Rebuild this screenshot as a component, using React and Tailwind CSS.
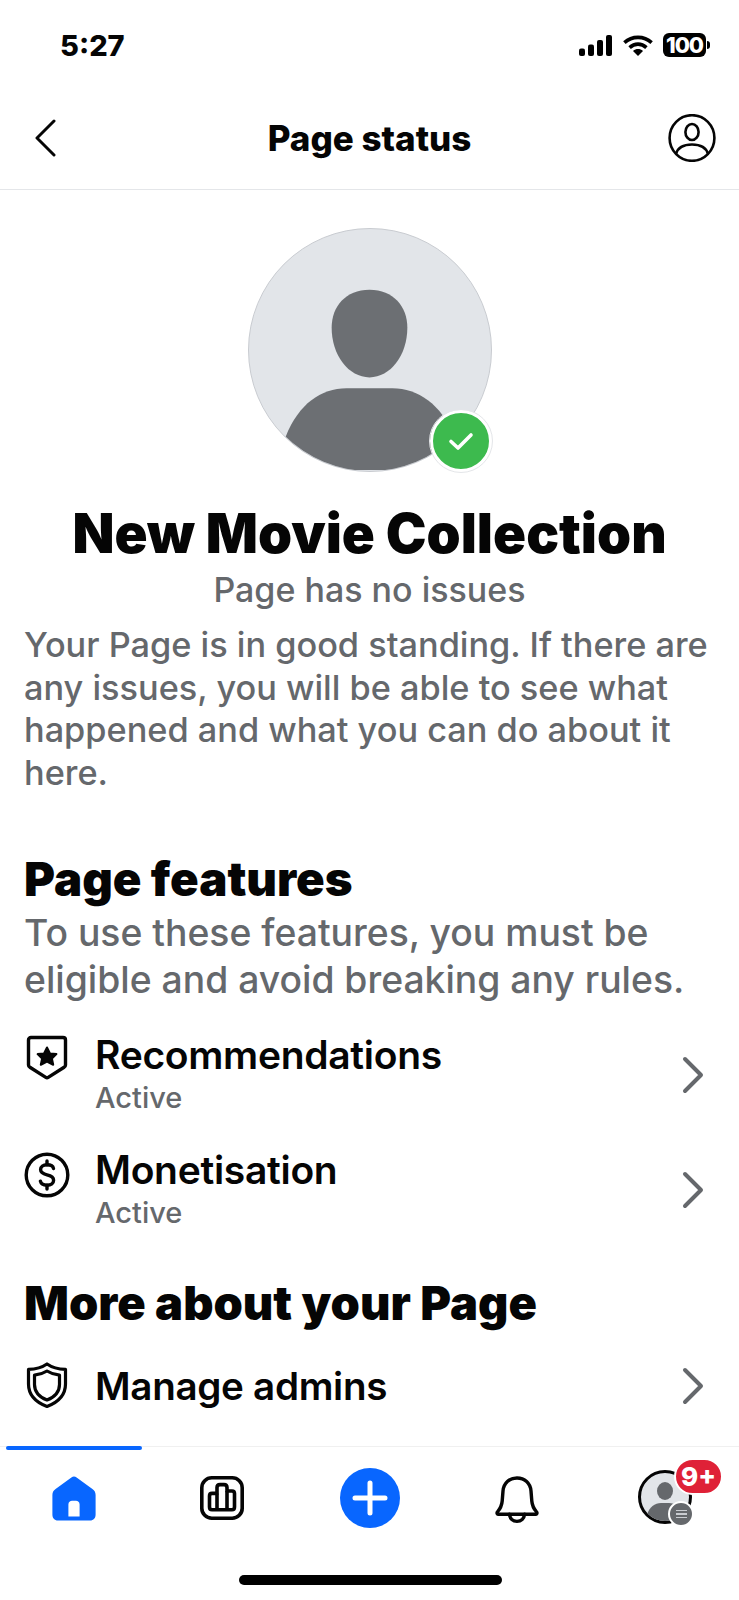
import React from 'react';

// Status bar glyphs
const StatusIcons = () => (
  <div className="flex items-center gap-[10px]">
    <svg width="34" height="21" viewBox="0 0 34 21" fill="#000">
      <rect x="0" y="13.5" width="6" height="7.5" rx="2" />
      <rect x="9" y="9.5" width="6" height="11.5" rx="2" />
      <rect x="18" y="5" width="6" height="16" rx="2" />
      <rect x="27" y="0" width="6" height="21" rx="2" />
    </svg>
    <svg width="30" height="21" viewBox="0 0 30 21" fill="none" stroke="#000" strokeWidth="3.6">
      <path d="M1.4 7.6C9 0.6 21 0.6 28.6 7.6" />
      <path d="M6.6 12.6C11.6 8 18.4 8 23.4 12.6" />
      <path d="M10 16C13 13.4 17 13.4 20 16L15 21Z" fill="#000" stroke="none" />
    </svg>
    <div className="flex items-center">
      <div className="w-[43px] h-[24px] rounded-[6px] bg-black text-white flex items-center justify-center text-[22px] font-extrabold tracking-[-1px] leading-none">100</div>
      <div className="w-[3px] h-[8px] bg-black rounded-r-full ml-[1px]" />
    </div>
  </div>
);

const Chevron = () => (
  <svg width="24" height="38" viewBox="0 0 24 38" fill="none" stroke="#65686c" strokeWidth="4" strokeLinecap="round" strokeLinejoin="round">
    <path d="M4 3L20 19L4 35" />
  </svg>
);

const StarShield = () => (
  <svg width="42" height="46" viewBox="0 0 42 46" fill="none">
    <path d="M5 2.5H37C38.4 2.5 39.5 3.6 39.5 5V30C39.5 31 39 31.8 38.1 32.3L22.2 42.4C21.4 42.9 20.6 42.9 19.8 42.4L3.9 32.3C3 31.8 2.5 31 2.5 30V5C2.5 3.6 3.6 2.5 5 2.5Z" stroke="#050505" strokeWidth="3.4" strokeLinejoin="round" />
    <path d="M21 12.5L24 18.4L30.4 19.1L25.9 23.5L27.2 29.8L21 26.6L14.8 29.8L16.1 23.5L11.6 19.1L18 18.4Z" fill="#050505" stroke="#050505" strokeWidth="2" strokeLinejoin="round" />
  </svg>
);

const Dollar = () => (
  <svg width="46" height="46" viewBox="0 0 46 46" fill="none" stroke="#050505" strokeWidth="3.4" strokeLinecap="round" strokeLinejoin="round">
    <circle cx="23" cy="23" r="20.8" />
    <path d="M29.5 16.5C29 14 26.5 12.8 23 12.8C19.2 12.8 16.6 14.6 16.6 17.6C16.6 20.6 19.4 22 23 22.8C26.8 23.6 29.6 25 29.6 28.2C29.6 31.2 27 33.2 23 33.2C19.4 33.2 17 31.8 16.4 29.2" />
    <path d="M23 9V12.8M23 33.2V37" />
  </svg>
);

const AdminShield = () => (
  <svg width="42" height="46" viewBox="0 0 42 46" fill="none" stroke="#050505" strokeLinejoin="round">
    <path d="M21 2C26 5.5 32 7.2 39.5 7.4V22C39.5 33 31.5 40.5 21 44.5C10.5 40.5 2.5 33 2.5 22V7.4C10 7.2 16 5.5 21 2Z" strokeWidth="3.2" />
    <path d="M21 9C25 11.5 29 12.8 33.5 13.2V22.4C33.5 29.8 28.5 35 21 38C13.5 35 8.5 29.8 8.5 22.4V13.2C13 12.8 17 11.5 21 9Z" strokeWidth="3.2" />
  </svg>
);

const FeatureRow = ({ icon, title, sub, iconBox, titleSize = 'text-[39px]' }) => (
  <div className="flex items-start">
    <div className={`w-[71px] flex shrink-0 ${iconBox}`}>{icon}</div>
    <div className="flex-1">
      <div className={`${titleSize} leading-[44px] font-semibold text-[#050505] tracking-[-0.3px]`}>{title}</div>
      {sub && <div className="text-[29px] leading-[34px] font-medium text-[#65686c] mt-[4px]">{sub}</div>}
    </div>
    <div className={`w-[24px] mr-[10px] ${sub ? 'mt-[23px]' : 'mt-[3px]'}`}><Chevron /></div>
  </div>
);

const TabBar = () => (
  <nav className="relative h-[154px] border-t border-[#f0f0f0] grid grid-cols-5 shrink-0">
    <div className="absolute left-[6px] top-[-1px] w-[136px] h-[4px] rounded-full bg-[#0866ff]" />
    <div className="flex justify-center pt-[29px]">
      <svg width="44" height="46" viewBox="0 0 44 46">
        <path fillRule="evenodd" fill="#0866ff" d="M19.4 1.4C21 0.2 23 0.2 24.6 1.4L40.4 13C42.6 14.6 43.6 16.4 43.6 19V38.4C43.6 42 41.6 44.4 38 44.4H6C2.4 44.4 0.4 42 0.4 38.4V19C0.4 16.4 1.4 14.6 3.6 13ZM16.4 40.4H27.6V28.4C27.6 26 25.8 24.8 24 24.8H20C18.2 24.8 16.4 26 16.4 28.4Z" />
      </svg>
    </div>
    <div className="flex justify-center pt-[29px]">
      <svg width="44" height="44" viewBox="0 0 44 44" fill="none" stroke="#050505" strokeWidth="3.6" strokeLinejoin="round">
        <rect x="1.8" y="1.8" width="40.4" height="40.4" rx="10" />
        <path d="M9.5 31V20C9.5 18.4 10.5 17.4 12 17.4H17V11.5C17 9.6 18.2 8.6 20 8.6H24C25.8 8.6 27 9.6 27 11.5V15H32C33.5 15 34.5 16 34.5 17.6V31C34.5 32.8 33.5 33.8 32 33.8H12C10.5 33.8 9.5 32.8 9.5 31Z" />
        <path d="M17 17.4V33.8M27 15V33.8" />
      </svg>
    </div>
    <div className="flex justify-center pt-[21px] pl-[1px]">
      <div className="w-[60px] h-[60px] rounded-full bg-[#0866ff] flex items-center justify-center">
        <svg width="36" height="36" viewBox="0 0 36 36" stroke="#fff" strokeWidth="5" strokeLinecap="round">
          <path d="M18 3V33M3 18H33" />
        </svg>
      </div>
    </div>
    <div className="flex justify-center pt-[29px]">
      <svg width="44" height="48" viewBox="0 0 44 48" fill="none" stroke="#050505" strokeWidth="3.4" strokeLinejoin="round" strokeLinecap="round">
        <path d="M2.4 36C5 33 6.8 30 7.2 25L8 15C8.6 7 14.4 2 22 2C29.6 2 35.4 7 36 15L36.8 25C37.2 30 39 33 41.6 36C42.4 37.2 41.8 38.2 40.4 38.2H3.6C2.2 38.2 1.6 37.2 2.4 36Z" />
        <path d="M14.4 38.2C14.8 43 18 45.4 22 45.4C26 45.4 29.2 43 29.6 38.2" />
      </svg>
    </div>
    <div className="flex justify-center pt-[22px]">
      <div className="relative w-[54px] h-[54px] mt-[1px]">
        <div className="w-[54px] h-[54px] rounded-full border-[3px] border-[#050505] bg-[#e2e5e9] overflow-hidden">
          <svg width="48" height="48" viewBox="0 0 48 48" fill="#65686c">
            <ellipse cx="24" cy="18" rx="8" ry="9" />
            <path d="M6 42C8 34 14 30 20 30H28C34 30 40 34 42 42L42 48H6Z" />
          </svg>
        </div>
        <div className="absolute right-[-2px] bottom-[-3px] w-[26px] h-[26px] rounded-full bg-[#65686c] border-2 border-white flex flex-col items-center justify-center gap-[2px]">
          <div className="w-[11px] h-[1.5px] bg-[#c9ccd1]" />
          <div className="w-[11px] h-[1.5px] bg-[#c9ccd1]" />
          <div className="w-[11px] h-[1.5px] bg-[#c9ccd1]" />
        </div>
        <div className="absolute left-[36px] top-[-12px] w-[49px] h-[37px] rounded-full bg-[#df2137] border-2 border-white flex items-center justify-center text-white text-[26px] font-extrabold leading-none">9+</div>
      </div>
    </div>
    <div className="absolute left-[239px] top-[128px] w-[263px] h-[10px] rounded-full bg-black" />
  </nav>
);

export default function App() {
  return (
    <div className="w-[739px] h-[1600px] bg-white flex flex-col overflow-hidden font-['Inter',sans-serif] text-[#050505]">
      {/* status bar */}
      <div className="h-[100px] flex items-start justify-between pt-[29px] pl-[60px] pr-[29px] shrink-0">
        <div className="text-[29px] leading-[34px] font-extrabold">5:27</div>
        <div className="pt-[4px]"><StatusIcons /></div>
      </div>

      {/* header */}
      <div className="h-[90px] flex items-center justify-between pl-[34px] pr-[23px] border-b border-[#e4e6e9] shrink-0">
        <svg width="24" height="38" viewBox="0 0 24 38" fill="none" stroke="#050505" strokeWidth="3" strokeLinecap="round" strokeLinejoin="round" className="mb-[14px]">
          <path d="M20 2L3 19L20 36" />
        </svg>
        <div className="text-[35px] leading-[40px] font-extrabold mb-[14px] ml-[13px]">Page status</div>
        <svg width="48" height="48" viewBox="0 0 48 48" fill="none" stroke="#050505" strokeWidth="2.6" className="mb-[14px]">
          <ellipse cx="24" cy="24" rx="22.4" ry="22.8" />
          <ellipse cx="24" cy="18" rx="6.6" ry="8" />
          <path d="M8 40C10 33 16 30.5 24 30.5C32 30.5 38 33 40 40" />
        </svg>
      </div>

      <main className="flex-1 min-h-0 flex flex-col px-[24px]">
        {/* avatar */}
        <div className="flex justify-center pt-[38px]">
          <div className="relative w-[244px] h-[244px]">
            <div className="w-[244px] h-[244px] rounded-full bg-[#e2e5e9] border-[1.5px] border-[#c9ccd1] overflow-hidden">
              <svg width="241" height="241" viewBox="0 0 242 242" fill="#6c6f73">
                <path d="M121 61C145 61 159 78 159 99C159 127 142 149 121 149C100 149 83 127 83 99C83 78 97 61 121 61Z" />
                <path d="M98 160H144C170 160 192 176 207 208V242H37V208C50 176 72 160 98 160Z" />
              </svg>
            </div>
            <div className="absolute right-[0px] bottom-[0px] w-[62px] h-[62px] rounded-full bg-[#3dba4e] border-[3px] border-white outline outline-1 outline-[#e4e6e9] flex items-center justify-center">
              <svg width="28" height="22" viewBox="0 0 28 22" fill="none" stroke="#fff" strokeWidth="3.6" strokeLinecap="round" strokeLinejoin="round">
                <path d="M4 11.5L11 18L24 5" />
              </svg>
            </div>
          </div>
        </div>

        <h1 className="text-center text-[54.6px] leading-[64px] font-black text-[#050505] mt-[29px] whitespace-nowrap">New Movie Collection</h1>
        <div className="text-center text-[34px] leading-[42px] font-medium text-[#65686c] mt-[4px]">Page has no issues</div>
        <p className="text-[34.3px] leading-[42.6px] font-medium text-[#65686c] mt-[13px] whitespace-nowrap">
          Your Page is in good standing. If there are<br />any issues, you will be able to see what<br />happened and what you can do about it<br />here.
        </p>

        <h2 className="text-[47.3px] leading-[52px] font-black text-[#050505] mt-[59px]">Page features</h2>
        <p className="text-[37.3px] leading-[47px] font-medium text-[#65686c] mt-[4px]">
          To use these features, you must be eligible and avoid breaking any rules.
        </p>

        <div className="mt-[30px]">
          <FeatureRow icon={<StarShield />} title="Recommendations" sub="Active" iconBox="pt-[2px] pl-[2px]" />
        </div>
        <div className="mt-[33px]">
          <FeatureRow icon={<Dollar />} title="Monetisation" sub="Active" iconBox="pt-[4px]" />
        </div>

        <h2 className="text-[47px] leading-[52px] font-black text-[#050505] mt-[47px] whitespace-nowrap">More about your Page</h2>
        <div className="mt-[35px]">
          <FeatureRow icon={<AdminShield />} title="Manage admins" titleSize="text-[38.6px]" iconBox="mt-[-2px] pl-[2px]" />
        </div>
      </main>

      <TabBar />
    </div>
  );
}
